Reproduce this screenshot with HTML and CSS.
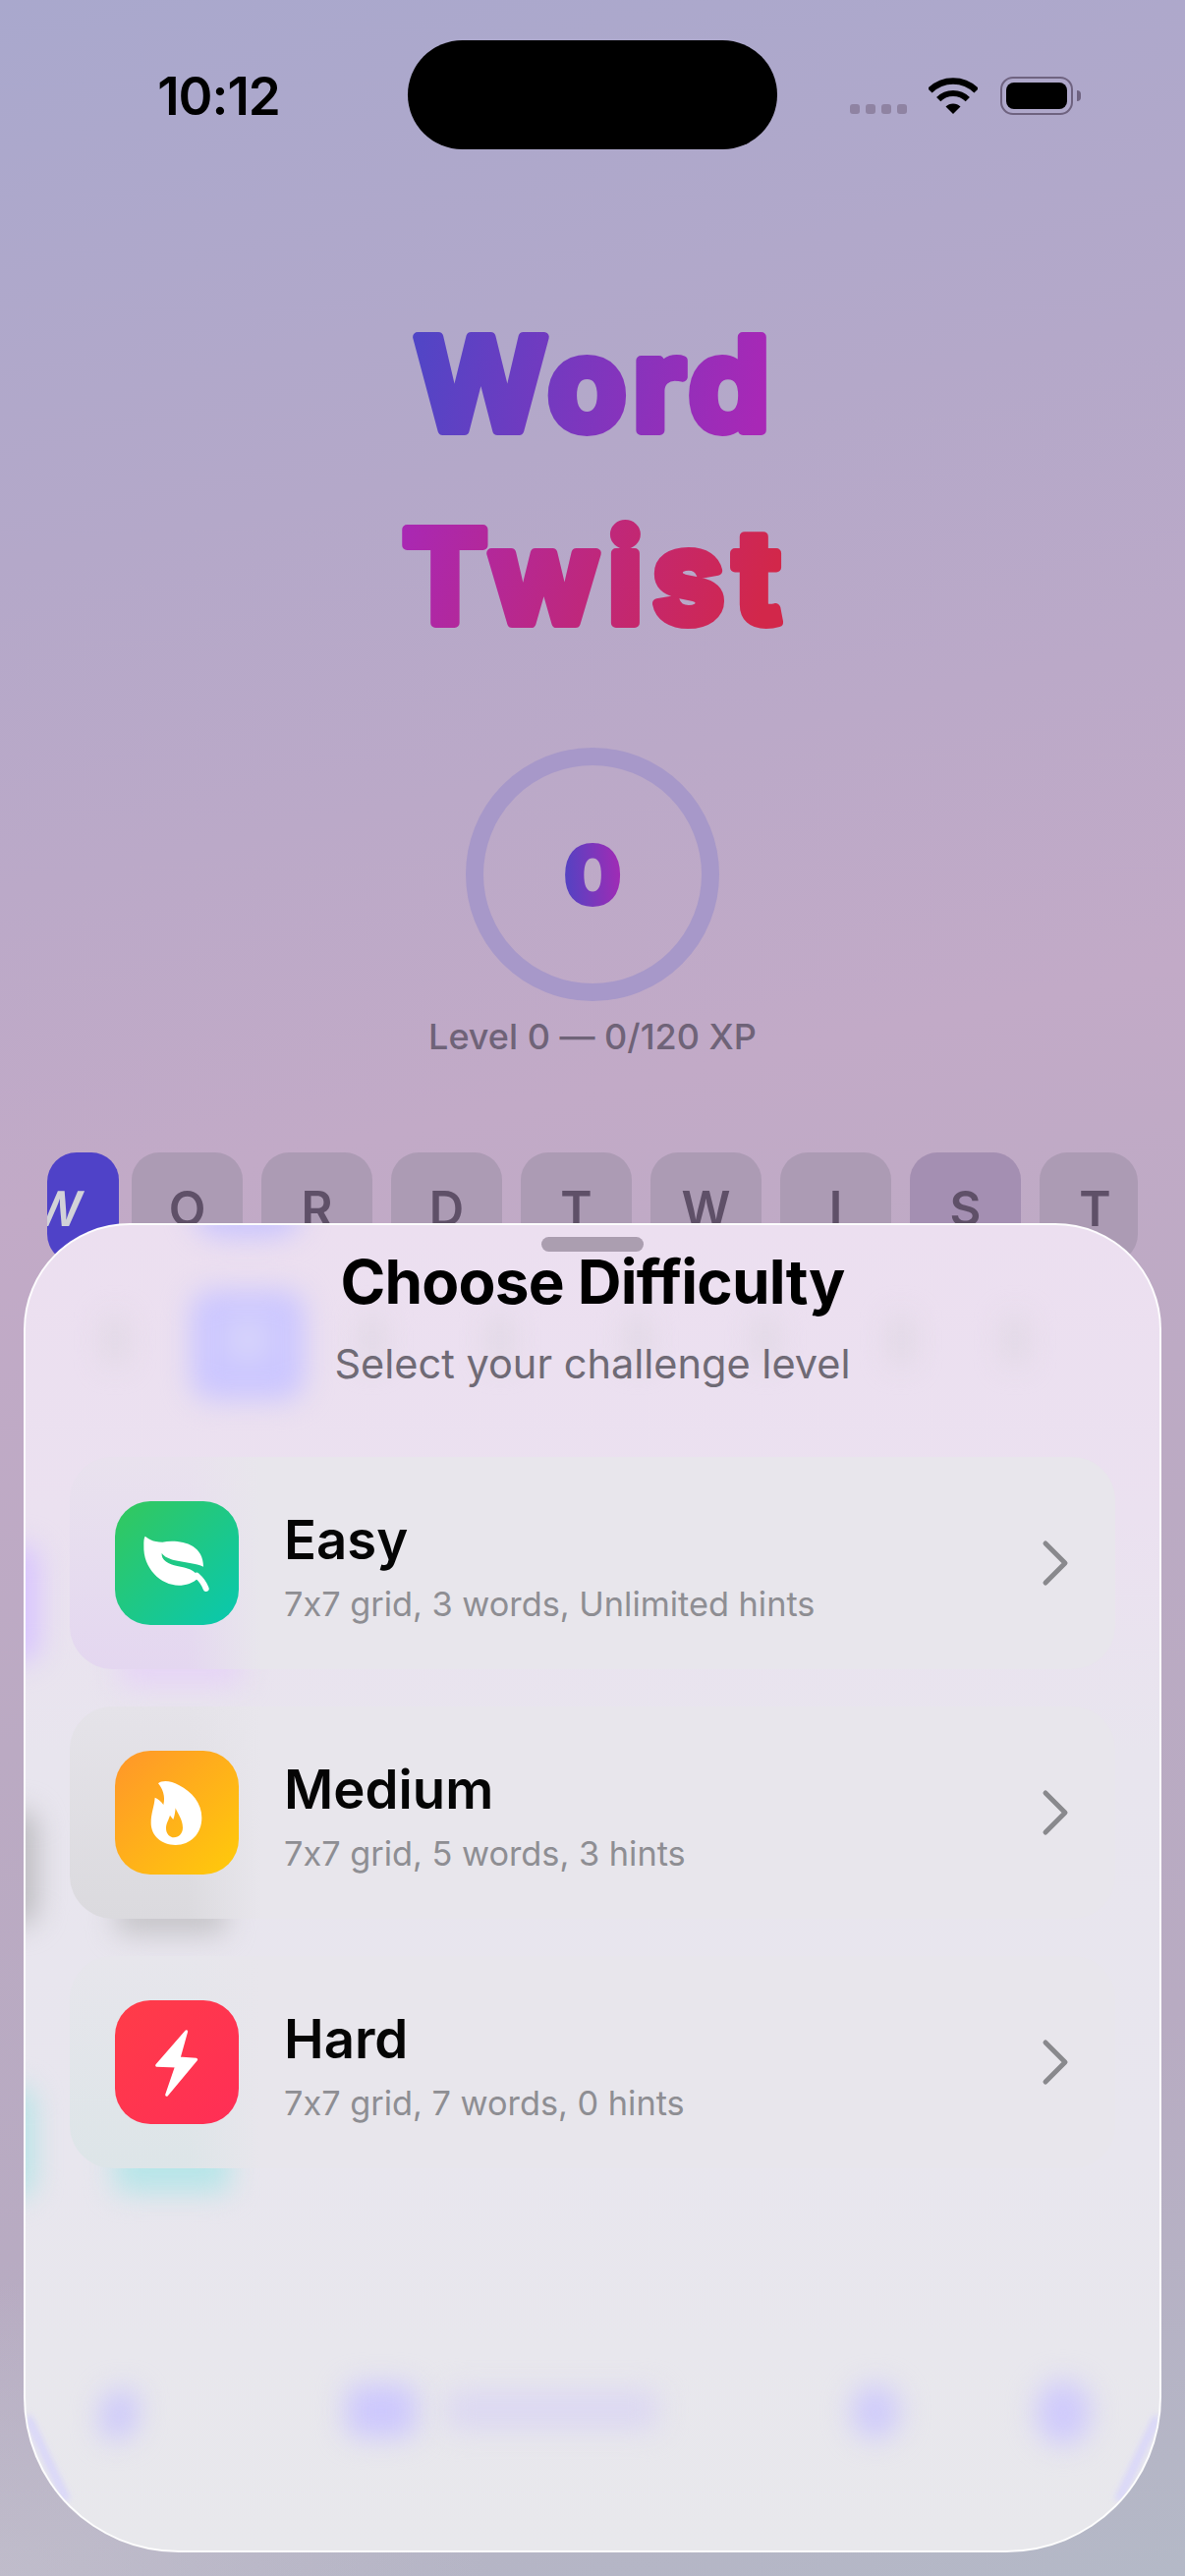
FILE: index.html
```html
<!DOCTYPE html>
<html lang="en">
<head>
<meta charset="utf-8">
<title>Word Twist</title>
<link rel="stylesheet" href="styles.css">
</head>
<body>
<div class="app">
  <header class="status">
    <span class="time">10:12</span>
    <span class="island"></span>
    <span class="status-icons">
      <span class="dots"><i></i><i></i><i></i><i></i></span>
      <svg class="wifi" viewBox="0 0 50 37" width="50" height="37">
        <path class="wifi-arc outer" d="M1.3 13.3A33.5 33.5 0 0 1 48.7 13.3"/>
        <path class="wifi-arc middle" d="M10.2 22.2A21 21 0 0 1 39.8 22.2"/>
        <path class="wifi-core" d="M25 37L17.5 29.5A10.6 10.6 0 0 1 32.5 29.5Z"/>
      </svg>
      <span class="battery"><span class="battery-fill"></span></span>
      <span class="battery-nub"></span>
    </span>
  </header>

  <h1 class="title">
    <svg class="title-art" viewBox="0 0 1206 388" width="1206" height="388" role="img">
      <defs>
        <linearGradient id="gradWord" x1="0" y1="0" x2="1" y2="0.08">
          <stop offset="0" stop-color="#4f46c6"/>
          <stop offset="1" stop-color="#a828b6"/>
        </linearGradient>
        <linearGradient id="gradTwist" x1="0" y1="0" x2="1" y2="0.12">
          <stop offset="0" stop-color="#a828b6"/>
          <stop offset="1" stop-color="#d2274a"/>
        </linearGradient>
      </defs>
      <text class="title-line word" x="606" y="146.5">Word</text>
      <text class="title-line twist" x="607" y="342.5">Twist</text>
    </svg>
  </h1>

  <section class="level">
    <div class="ring">
      <svg class="ring-digit" viewBox="0 0 110 120" width="110" height="120">
        <defs>
          <linearGradient id="gradZero" x1="0" y1="0.1" x2="1" y2="0">
            <stop offset="0" stop-color="#5542c2"/>
            <stop offset="1" stop-color="#a62ab4"/>
          </linearGradient>
        </defs>
        <text class="digit" x="55" y="91">0</text>
      </svg>
    </div>
    <p class="level-label">Level 0 — 0/120 XP</p>
  </section>

  <div class="tiles">
    <span class="tile tile-active"><b>W</b></span>
    <span class="tile">O</span>
    <span class="tile">R</span>
    <span class="tile">D</span>
    <span class="tile">T</span>
    <span class="tile">W</span>
    <span class="tile">I</span>
    <span class="tile tile-dark">S</span>
    <span class="tile">T</span>
  </div>

  <section class="sheet">
    <div class="sheet-blur" aria-hidden="true">
      <i class="blob b-top"></i>
      <i class="blob b-cell"></i>
      <i class="blob g1"></i><i class="blob g2"></i><i class="blob g3"></i><i class="blob g4"></i><i class="blob g5"></i><i class="blob g6"></i><i class="blob g7"></i>
      <i class="blob side-purple"></i><i class="blob side-grey"></i><i class="blob side-teal"></i>
      <i class="blob glow-purple"></i><i class="blob glow-grey"></i><i class="blob glow-teal"></i>
      <i class="blob nav1"></i><i class="blob nav2"></i><i class="blob nav3"></i><i class="blob nav4"></i><i class="blob nav5"></i>
      <i class="blob edge-l"></i><i class="blob edge-r"></i>
    </div>
    <div class="sheet-body">
      <span class="handle"></span>
      <h2 class="sheet-title">Choose Difficulty</h2>
      <p class="sheet-sub">Select your challenge level</p>
      <ul class="rows">
        <li class="row row-easy">
          <span class="badge badge-easy">
            <svg viewBox="230 145 378 378" width="126" height="126">
              <path class="glyph" d="M322 252C330 258 345 270 375 270C420 262 500 270 500 345C480 335 440 332 410 325C395 320 380 315 373 303C370 325 395 338 420 343C450 348 475 355 485 378C470 395 445 402 425 402C370 402 315 350 318 280C318 268 318 258 322 252Z"/>
              <path class="stem" d="M480 372C495 385 503 398 508 412"/>
            </svg>
          </span>
          <span class="row-text"><strong>Easy</strong><small>7x7 grid, 3 words, Unlimited hints</small></span>
          <svg class="chev" viewBox="0 0 28 48" width="28" height="48"><path d="M4 4L24 24L4 44"/></svg>
        </li>
        <li class="row row-medium">
          <span class="badge badge-medium">
            <svg viewBox="230 125 378 378" width="126" height="126">
              <path class="glyph" fill-rule="evenodd" d="M362 225C372 215 400 215 425 230C465 250 495 285 495 330C495 380 460 413 415 413C372 413 340 385 340 345C340 315 350 295 352 268C362 272 372 280 378 290C385 265 375 240 362 225ZM415 300C420 315 437 335 437 360C437 378 425 390 410 390C397 390 386 378 386 362C386 345 395 335 398 322C403 328 405 332 408 335C412 325 414 312 415 300Z"/>
            </svg>
          </span>
          <span class="row-text"><strong>Medium</strong><small>7x7 grid, 5 words, 3 hints</small></span>
          <svg class="chev" viewBox="0 0 28 48" width="28" height="48"><path d="M4 4L24 24L4 44"/></svg>
        </li>
        <li class="row row-hard">
          <span class="badge badge-hard">
            <svg viewBox="230 887 378 378" width="126" height="126">
              <path class="glyph bolt" d="M448 982L358 1086L418 1088L388 1176L478 1068L425 1064Z"/>
            </svg>
          </span>
          <span class="row-text"><strong>Hard</strong><small>7x7 grid, 7 words, 0 hints</small></span>
          <svg class="chev" viewBox="0 0 28 48" width="28" height="48"><path d="M4 4L24 24L4 44"/></svg>
        </li>
      </ul>
    </div>
  </section>
</div>
</body>
</html>
```

FILE: styles.css
```css
* { box-sizing: border-box; }
html, body { margin: 0; padding: 0; }
body { font-family: Inter, "Liberation Sans", sans-serif; font-feature-settings: "calt" 0; }

.app {
  position: relative;
  width: 1206px;
  height: 2622px;
  overflow: hidden;
  background:
    radial-gradient(500px 300px at 0% 100%, rgba(200,196,208,.55), transparent),
    linear-gradient(168deg, #a9a8cd 0%, #b4a8c9 20%, #c2aac7 43%, #bbaac3 62%, #b8abc2 80%, #b4b9c7 100%);
}

/* status bar */
.status {
  display: flex;
  align-items: flex-start;
  height: 152px;
  padding-top: 41px;
  position: relative;
}
.time {
  width: 415px;
  padding-top: 29px;
  text-align: center;
  padding-left: 30px;
  font-size: 53px;
  line-height: 56px;
  font-weight: 600;
  letter-spacing: -1px;
  color: #000;
}
.island {
  width: 376px;
  height: 111px;
  border-radius: 56px;
  background: #000;
}
.status-icons {
  display: flex;
  align-items: flex-start;
  margin-left: 74px;
  padding-top: 37px;
}
.dots { display: flex; gap: 6px; margin-top: 28px; margin-right: 22px; }
.dots i { width: 10px; height: 10px; border-radius: 3px; background: #8f83a2; }
.wifi { display: block; margin-top: 1px; margin-right: 23px; }
.wifi-arc { fill: none; stroke: #000; }
.wifi-arc.outer { stroke-width: 6.5; }
.wifi-arc.middle { stroke-width: 6; }
.wifi-core { fill: #000; }
.battery {
  width: 74px;
  height: 39px;
  padding: 4px;
  border: 2.5px solid #6f6380;
  border-radius: 13px;
}
.battery-fill { display: block; height: 100%; border-radius: 8px; background: #000; }
.battery-nub {
  width: 4px;
  height: 11px;
  margin: 14px 0 0 4px;
  border-radius: 0 4px 4px 0;
  background: #6f6380;
}

/* title */
.title { margin: 0; padding-top: 139px; }
.title-art { display: block; }
.title-line {
  font-family: Inter, sans-serif;
  font-weight: 700;
  font-size: 130px;
  text-anchor: middle;
  stroke-width: 10;
  stroke-linejoin: round;
}
.word { fill: url(#gradWord); stroke: url(#gradWord); letter-spacing: 7px; }
.twist { fill: url(#gradTwist); stroke: url(#gradTwist); letter-spacing: 10px; }

/* level ring */
.level { display: flex; flex-direction: column; align-items: center; margin-top: 82px; }
.ring {
  width: 258px;
  height: 258px;
  display: flex;
  align-items: center;
  justify-content: center;
  border: 18px solid #a798c9;
  border-radius: 50%;
}
.ring-digit { display: block; }
.digit {
  font-family: Inter, sans-serif;
  font-weight: 900;
  font-size: 84px;
  text-anchor: middle;
  fill: url(#gradZero);
  stroke: url(#gradZero);
  stroke-width: 2;
  stroke-linejoin: round;
}
.level-label {
  margin: 15px 0 0;
  font-size: 36px;
  line-height: 42px;
  font-weight: 550;
  color: #6f6378;
}

/* tile strip that disappears below the sheet */
.tiles {
  display: flex;
  gap: 19px;
  margin: 97px 48px 0;
  height: 113px;
  overflow: hidden;
  border-radius: 30px;
}
.tile {
  flex: 0 0 113px;
  height: 113px;
  padding-top: 28px;
  text-align: center;
  border-radius: 28px;
  background: #ac9bb4;
  color: #5f5068;
  font-size: 49px;
  line-height: 60px;
  font-weight: 600;
}
.tile-active {
  flex-basis: 119px;
  margin-left: -46px;
  margin-right: -6px;
  padding-right: 6px;
  background: #4f42c8;
  color: #d2d2d8;
}
.tile-active b { display: inline-block; font-weight: 600; transform: skewX(-10deg); }
.tile-dark { background: #a48fb2; }

/* difficulty sheet */
.sheet {
  position: absolute;
  left: 24px;
  top: 1245px;
  width: 1158px;
  height: 1353px;
  border: 2px solid rgba(255,255,255,.9);
  border-radius: 108px 108px 158px 158px;
  overflow: hidden;
  background: linear-gradient(180deg, #ecdff0 0%, #ebe1f0 22%, #e8e5ee 40%, #e8e6ee 70%, #e8e8ec 100%);
}
.sheet-blur { position: absolute; inset: 0; }
.blob { position: absolute; display: block; filter: blur(14px); }

.b-top { left: 170px; top: -50px; width: 112px; height: 62px; border-radius: 30px; background: #c9c4fe; }
.b-cell {
  left: 168px;
  top: 66px;
  width: 116px;
  height: 112px;
  border-radius: 22px;
  background: radial-gradient(circle at 50% 45%, #dcdaf9 0, #cbc6ff 42%);
}
.g1, .g2, .g3, .g4, .g5, .g6, .g7 { top: 92px; width: 22px; height: 50px; border-radius: 10px; background: #dfd7e3; }
.g1 { left: 80px; }
.g2 { left: 342px; }
.g3 { left: 472px; }
.g4 { left: 612px; }
.g5 { left: 742px; }
.g6 { left: 880px; }
.g7 { left: 996px; }
.side-purple { left: -30px; top: 325px; width: 44px; height: 120px; border-radius: 20px; background: #d8c4ff; }
.side-grey { left: -30px; top: 595px; width: 42px; height: 118px; border-radius: 20px; background: #bdbcc0; }
.side-teal { left: -30px; top: 876px; width: 38px; height: 114px; border-radius: 20px; background: #b4e4e6; }
.glow-purple { left: 96px; top: 425px; width: 124px; height: 44px; background: #e6d4f6; border-radius: 10px; }
.glow-grey { left: 92px; top: 680px; width: 112px; height: 42px; background: #c6c5c9; border-radius: 10px; }
.glow-teal { left: 90px; top: 934px; width: 118px; height: 50px; background: #b6e5e8; border-radius: 10px; }
.nav1 { left: 76px; top: 1186px; width: 38px; height: 50px; border-radius: 50% 20% 50% 30%; background: #cdc9fb; }
.nav2 { left: 326px; top: 1180px; width: 72px; height: 54px; border-radius: 14px; background: #cdc8fd; }
.nav3 { left: 428px; top: 1186px; width: 216px; height: 40px; border-radius: 8px; background: #dcd8f2; }
.nav4 { left: 840px; top: 1180px; width: 50px; height: 56px; border-radius: 50%; background: #cfcbfb; }
.nav5 { left: 1028px; top: 1176px; width: 56px; height: 66px; border-radius: 50%; background: #cfcafc; }
.edge-l { left: 18px; top: 1208px; width: 8px; height: 95px; transform: rotate(-25deg); background: #d8d5fa; filter: blur(3px); }
.edge-r { left: 1128px; top: 1208px; width: 8px; height: 95px; transform: rotate(25deg); background: #d8d5fa; filter: blur(3px); }

.sheet-body {
  position: relative;
  display: flex;
  flex-direction: column;
  align-items: center;
  padding-top: 12px;
}
.handle { width: 104px; height: 15px; border-radius: 8px; background: #ab9eb0; }
.sheet-title {
  margin: -5px 0 0;
  font-size: 62px;
  line-height: 72px;
  font-weight: 700;
  letter-spacing: -0.8px;
  color: #000;
}
.sheet-sub {
  margin: 22px 0 0;
  font-size: 41.5px;
  line-height: 50px;
  font-weight: 400;
  color: #6f6a75;
}

.rows {
  list-style: none;
  width: 100%;
  margin: 0;
  padding: 70px 45px 0;
  display: flex;
  flex-direction: column;
  gap: 38px;
}
.row {
  display: flex;
  align-items: center;
  height: 216px;
  padding: 0 47px 0 46px;
  border-radius: 44px;
}
.row-easy {
  background:
    linear-gradient(90deg, rgba(232,230,236,0) 120px, #e8e6ec 195px),
    linear-gradient(180deg, #e9e2ee 0%, #e4d7f0 100%);
}
.row-medium {
  background:
    linear-gradient(90deg, rgba(232,230,236,0) 120px, #e8e6ec 195px),
    linear-gradient(180deg, #e5e3e9 0%, #dbdade 100%);
}
.row-hard {
  background:
    linear-gradient(90deg, rgba(232,230,236,0) 120px, #e8e6ec 195px),
    linear-gradient(180deg, #e7e6ec 0%, #dde5e8 100%);
}
.badge {
  flex: 0 0 126px;
  width: 126px;
  height: 126px;
  border-radius: 36px;
  display: block;
}
.badge svg { display: block; }
.badge-easy { background: linear-gradient(135deg, #34c85c, #08c8b0); }
.badge-medium { background: linear-gradient(135deg, #ff962a, #ffcb0a); }
.badge-hard { background: linear-gradient(135deg, #ff3c48, #ff2e56); }
.glyph { fill: #fff; }
.stem { fill: none; stroke: #fff; stroke-width: 18; stroke-linecap: round; }
.bolt { stroke: #fff; stroke-width: 9; stroke-linejoin: round; }

.row-text { flex: 1; display: flex; flex-direction: column; margin-left: 46px; padding-top: 8px; }
.row-text strong {
  font-size: 54.5px;
  line-height: 64px;
  font-weight: 600;
  color: #050505;
}
.row-text small {
  margin-top: 12px;
  font-size: 34.3px;
  line-height: 44px;
  font-weight: 400;
  color: #8e8e93;
}
.chev { display: block; }
.chev path { fill: none; stroke: #89898d; stroke-width: 5; stroke-linecap: round; stroke-linejoin: round; }
```
